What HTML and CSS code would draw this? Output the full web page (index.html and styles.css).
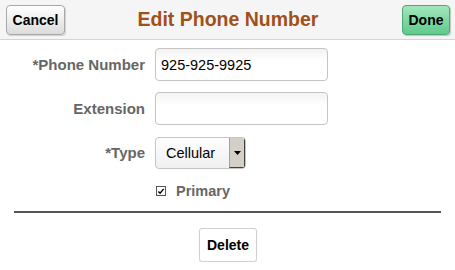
FILE: index.html
```html
<!DOCTYPE html>
<html lang="en">

<head>
    <meta charset="UTF-8">
    <meta name="viewport" content="width=device-width, initial-scale=1.0">
    <title>Edit Phone Number</title>
    <link rel="stylesheet" href="styles.css">
</head>

<body>
    <div class="header">
        <button class="btn btn-cancel">Cancel</button>
        <h1 class="title">Edit Phone Number</h1>
        <button class="btn btn-done">Done</button>
    </div>
    <div class="form">
        <label class="label" for="phone">*Phone Number</label>
        <input class="field" id="phone" type="text" value="925-925-9925">

        <label class="label" for="ext">Extension</label>
        <input class="field" id="ext" type="text" value="">

        <label class="label" for="type">*Type</label>
        <div class="select">
            <span class="select-value">Cellular</span>
            <span class="select-arrow">
                <svg width="7" height="4" viewBox="0 0 7 4"><path d="M0,0 L7,0 L3.5,4 Z" fill="#000" /></svg>
            </span>
        </div>

        <span></span>
        <label class="check">
            <span class="check-box">
                <svg width="9" height="9" viewBox="0 0 9 9"><path d="M1.5,4.5 L3.5,6.5 L7.5,1.5" fill="none" stroke="#000" stroke-width="1.6" /></svg>
            </span>
            <span class="check-label">Primary</span>
        </label>
    </div>
    <hr class="divider">
    <div class="actions">
        <button class="btn btn-delete">Delete</button>
    </div>
</body>

</html>
```

FILE: styles.css
```css
body {
    margin: 0;
    font-family: "Liberation Sans", Arial, sans-serif;
    background-color: #fff;
}

.header {
    display: grid;
    grid-template-columns: 1fr auto 1fr;
    align-items: center;
    height: 39px;
    padding: 0 5px 0 6px;
    background-color: #f5f5f5;
    border-bottom: 1px solid #d4d4d4;
}

.title {
    margin: 0;
    font-size: 19.5px;
    font-weight: bold;
    color: #a0501a;
}

.btn {
    font-family: "Liberation Sans", Arial, sans-serif;
    font-size: 14px;
    font-weight: bold;
    color: #000;
    cursor: pointer;
    border-radius: 4px;
}

.btn-cancel {
    justify-self: start;
    width: 59px;
    height: 30px;
    padding: 0;
    background: linear-gradient(#ffffff, #dcdcdc);
    border: 1px solid #a9a9a9;
    box-shadow: 1px 1px 1px rgba(0, 0, 0, 0.15);
}

.btn-done {
    justify-self: end;
    width: 48px;
    height: 30px;
    padding: 0;
    background: linear-gradient(#a3e6bc, #5fca8c);
    border: 1px solid #4fa874;
    box-shadow: 1px 1px 1px rgba(0, 0, 0, 0.2);
}

.form {
    display: grid;
    grid-template-columns: 145px 173px;
    column-gap: 10px;
    row-gap: 11px;
    align-items: center;
    padding-top: 8px;
}

.label {
    text-align: right;
    font-size: 15px;
    font-weight: bold;
    color: #666;
}

.field {
    box-sizing: border-box;
    height: 33px;
    width: 173px;
    padding: 0 5px;
    font-family: "Liberation Sans", Arial, sans-serif;
    font-size: 14.5px;
    color: #000;
    border: 1px solid #c4c4c4;
    border-radius: 4px;
    background: linear-gradient(#f3f3f3, #ffffff 40%);
}

.select {
    display: flex;
    box-sizing: border-box;
    width: 91px;
    height: 32px;
    margin-top: 1px;
    border: 1px solid #c4c4c4;
    border-radius: 4px;
    background: linear-gradient(#ffffff, #f0f0f0);
    overflow: hidden;
}

.select-value {
    flex: 1;
    display: flex;
    align-items: center;
    padding-left: 10px;
    font-size: 14.5px;
    color: #000;
}

.select-arrow {
    display: flex;
    align-items: center;
    justify-content: center;
    width: 14px;
    background-color: #d4d0c8;
    border-left: 1px solid #a0a0a0;
    border-right: 1px solid #404040;
    border-bottom: 1px solid #404040;
}

.check {
    display: flex;
    align-items: center;
    gap: 10px;
    margin-top: 3px;
}

.check-box {
    display: flex;
    align-items: center;
    justify-content: center;
    box-sizing: border-box;
    width: 10px;
    height: 10px;
    margin-left: 1px;
    border: 1px solid #555;
    background-color: #fff;
}

.check-label {
    font-size: 14.5px;
    font-weight: bold;
    color: #666;
}

.divider {
    margin: 12px 14px 0;
    border: none;
    border-top: 2px solid #555;
}

.actions {
    display: flex;
    justify-content: center;
    padding-top: 15px;
}

.btn-delete {
    width: 58px;
    height: 34px;
    padding: 0;
    margin-left: 1px;
    font-size: 14px;
    background-color: #fff;
    border: 1px solid #d0d0d0;
    border-radius: 3px;
    box-shadow: 0 1px 1px rgba(0, 0, 0, 0.1);
}
```
